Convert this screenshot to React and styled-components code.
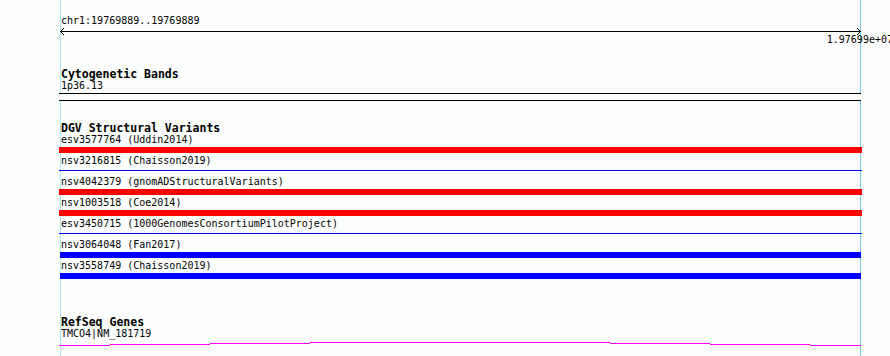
import React from "react";
import styled, { createGlobalStyle } from "styled-components";

const GlobalStyle = createGlobalStyle`
  html, body {
    margin: 0;
    padding: 0;
    background: #fcfefc;
    overflow: hidden;
  }
  body {
    font-family: "DejaVu Sans Mono", "Liberation Mono", monospace;
    color: #000;
  }
`;

const Page = styled.div`
  padding-left: 60px;
  height: 356px;
  overflow: hidden;
`;

const TrackColumn = styled.div`
  width: 799px;
  min-height: 356px;
  border-left: 1px solid #aee9ef;
  border-right: 1px solid #7fc9ee;
  display: flex;
  flex-direction: column;
`;

const Ruler = styled.div`
  display: flex;
  flex-direction: column;
  padding-top: 16px;
`;

const Label = styled.div`
  font-family: "DejaVu Sans Mono", "Liberation Mono", monospace;
  font-size: 10px;
  line-height: 10px;
  height: 10px;
  white-space: pre;
  color: #000;
`;

const EndLabel = styled(Label)`
  align-self: flex-end;
  margin-right: -33px;
`;

const ArrowSvg = styled.svg`
  display: block;
  margin-left: -1px;
  width: 802px;
  height: 9px;
  overflow: visible;
`;

const Track = styled.section`
  display: flex;
  flex-direction: column;
  margin-top: ${(p) => p.$gap}px;
`;

const TrackTitle = styled.div`
  font-family: "DejaVu Sans Mono", "Liberation Mono", monospace;
  font-weight: bold;
  font-size: 11.5px;
  line-height: 12px;
  height: 12px;
  margin-bottom: 1px;
  white-space: pre;
`;

const Band = styled.div`
  margin: 2px -1px 0 -2px;
  height: 6px;
  border-top: 1px solid #000;
  border-bottom: 1px solid #000;
  background: #fcfefc;
`;

const FeatureRow = styled.div`
  display: flex;
  flex-direction: column;
`;

const Bar = styled.div`
  background: ${(p) => p.$color};
  height: ${(p) => (p.$thin ? 1 : 6)}px;
  margin-top: ${(p) => (p.$thin ? 4 : 2)}px;
  margin-bottom: ${(p) => (p.$thin ? 6 : 3)}px;
  margin-left: ${(p) => (p.$inset ? -1 : -2)}px;
  margin-right: ${(p) => (p.$inset ? -1 : -2)}px;
`;

const GeneSvg = styled.svg`
  display: block;
  margin-left: -2px;
  width: 803px;
  height: 8px;
  overflow: visible;
`;

const RED = "#ff0000";
const BLUE = "#0000ff";

const variants = [
  { id: "esv3577764", src: "Uddin2014", color: RED },
  { id: "nsv3216815", src: "Chaisson2019", color: BLUE, thin: true },
  { id: "nsv4042379", src: "gnomADStructuralVariants", color: RED },
  { id: "nsv1003518", src: "Coe2014", color: RED },
  { id: "esv3450715", src: "1000GenomesConsortiumPilotProject", color: BLUE, thin: true },
  { id: "nsv3064048", src: "Fan2017", color: BLUE, inset: true },
  { id: "nsv3558749", src: "Chaisson2019", color: BLUE, inset: true },
];

const geneSegments = [
  [0, 51, 6.5],
  [51, 151, 5.5],
  [151, 251, 4.5],
  [251, 551, 3.5],
  [551, 651, 4.5],
  [651, 751, 5.5],
  [751, 802, 6.5],
];

export default function App() {
  return (
    <>
      <GlobalStyle />
      <Page>
        <TrackColumn>
          <Ruler>
            <Label>chr1:19769889..19769889</Label>
            <ArrowSvg viewBox="0 0 802 9" shapeRendering="crispEdges">
              <line x1="0" y1="5.5" x2="801" y2="5.5" stroke="#000" strokeWidth="1" />
              <polyline
                points="4,2 0.5,5.5 4,9"
                fill="none"
                stroke="#000"
                strokeWidth="1"
                shapeRendering="auto"
              />
              <polyline
                points="797,2 800.5,5.5 797,9"
                fill="none"
                stroke="#000"
                strokeWidth="1"
                shapeRendering="auto"
              />
            </ArrowSvg>
            <EndLabel>1.97699e+07</EndLabel>
          </Ruler>

          <Track $gap={23}>
            <TrackTitle>Cytogenetic Bands</TrackTitle>
            <Label>1p36.13</Label>
            <Band />
          </Track>

          <Track $gap={21}>
            <TrackTitle>DGV Structural Variants</TrackTitle>
            {variants.map((v) => (
              <FeatureRow key={v.id}>
                <Label>{`${v.id} (${v.src})`}</Label>
                <Bar $color={v.color} $thin={v.thin} $inset={v.inset} />
              </FeatureRow>
            ))}
          </Track>

          <Track $gap={34}>
            <TrackTitle>RefSeq Genes</TrackTitle>
            <Label>TMCO4|NM_181719</Label>
            <GeneSvg viewBox="0 0 803 8" shapeRendering="crispEdges">
              {geneSegments.map(([x1, x2, y]) => (
                <line
                  key={x1}
                  x1={x1}
                  y1={y}
                  x2={x2}
                  y2={y}
                  stroke="#ff00ff"
                  strokeWidth="1"
                />
              ))}
            </GeneSvg>
          </Track>
        </TrackColumn>
      </Page>
    </>
  );
}
